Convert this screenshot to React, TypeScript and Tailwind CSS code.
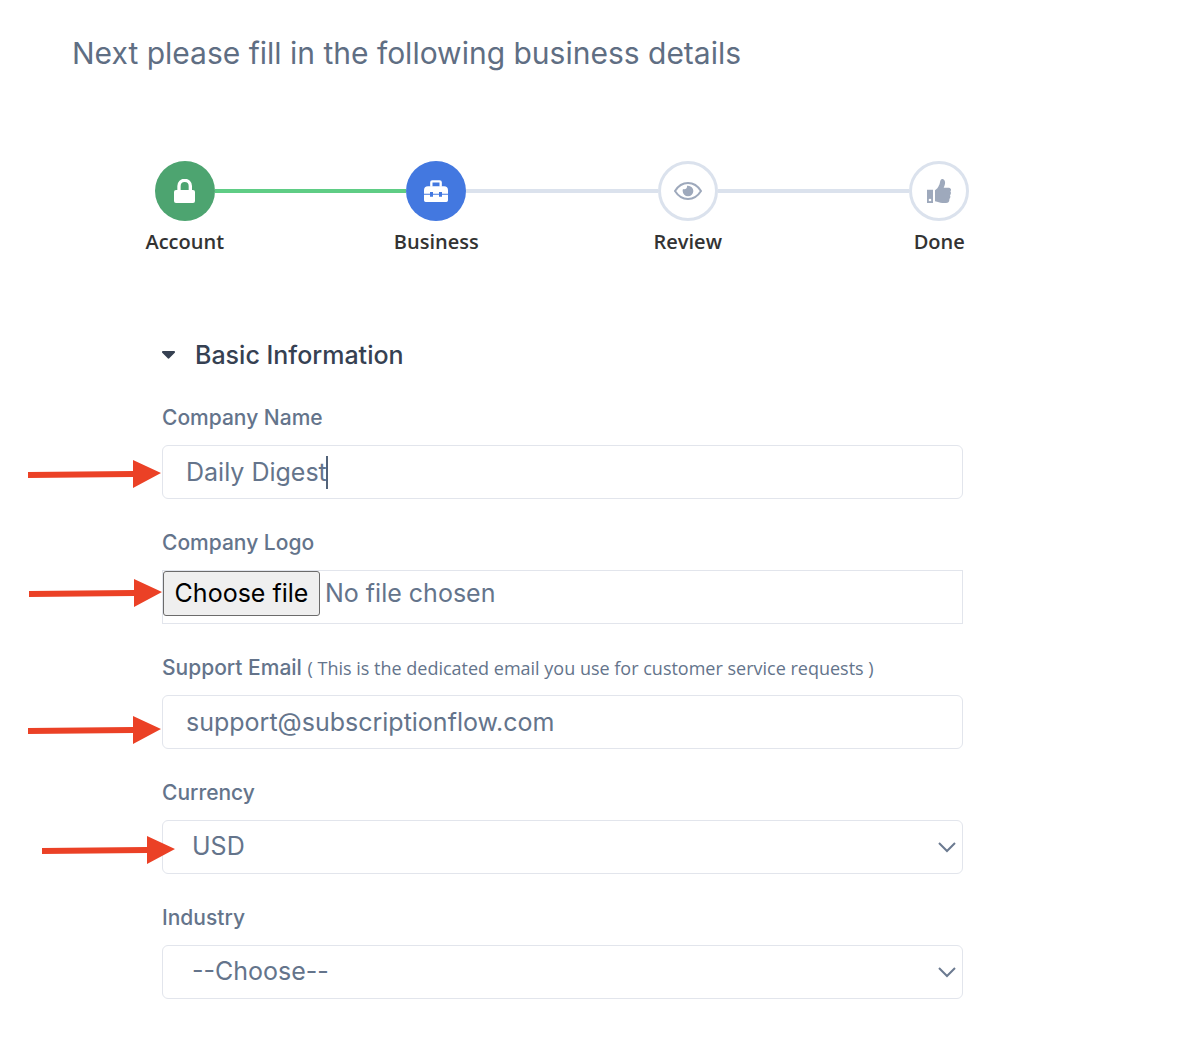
import React, { useState } from 'react'

const LockIcon = () => (
  <svg width="21" height="24" viewBox="0 0 63 72" fill="currentColor" aria-hidden="true">
    <path d="M15 36V21a17 17 0 0 1 34 0V36" fill="none" stroke="currentColor" strokeWidth="10" />
    <rect x="0" y="33" width="63" height="39" rx="6" />
  </svg>
)

const ToolboxIcon = () => (
  <svg width="24" height="22" viewBox="0 0 72 66" fill="currentColor" aria-hidden="true">
    <path d="M22 20V7a3 3 0 0 1 3-3h22a3 3 0 0 1 3 3V20" fill="none" stroke="currentColor" strokeWidth="7" />
    <path d="M12 19H60a12 12 0 0 1 12 12V41H54V36H45V41H27V36H18V41H0V31a12 12 0 0 1 12-12Z" />
    <path d="M0 44H18V50H27V44H45V50H54V44H72V61a5 5 0 0 1-5 5H5a5 5 0 0 1-5-5Z" />
  </svg>
)

const EyeIcon = () => (
  <svg width="28" height="18" viewBox="0 0 84 54" fill="none" aria-hidden="true">
    <path d="M3 27C13 11 26 3 42 3S71 11 81 27C71 43 58 51 42 51S13 43 3 27Z" stroke="currentColor" strokeWidth="6" strokeLinejoin="round" />
    <path d="M42 11a16 16 0 1 1-16 16c0-2 0-4 1-6 7 3 14-3 12-10Z" fill="currentColor" />
  </svg>
)

const ThumbIcon = () => (
  <svg width="24" height="24" viewBox="0 0 72 72" fill="currentColor" aria-hidden="true">
    <path fillRule="evenodd" d="M0 32H18V72H0ZM9 59a4 4 0 1 0 0 8 4 4 0 0 0 0-8Z" />
    <path d="M24 34C29 31 34 25 36 19C39 15 38 9 41 3C43-1 50-1 53 5C56 12 53 19 50 26H66C72 27 74 33 70 37C73 41 72 46 69 49C71 53 70 57 67 60C68 67 64 72 57 72H46C38 72 33 68 24 67Z" />
  </svg>
)

const Caret = () => (
  <svg width="13" height="8" viewBox="0 0 26 16" fill="currentColor" aria-hidden="true">
    <path d="M2 0H24C26 0 27 2 25 4L15 14C14 16 12 16 11 14L1 4C-1 2 0 0 2 0Z" />
  </svg>
)

const Chevron = () => (
  <svg
    className="pointer-events-none absolute right-[7px] top-[22px] text-[#6b7a90]"
    width="18"
    height="11"
    viewBox="0 0 18 11"
    fill="none"
    aria-hidden="true"
  >
    <path d="M1 1L9 9L17 1" stroke="currentColor" strokeWidth="2" />
  </svg>
)

const Arrow = ({ className }: { className: string }) => (
  <svg className={`pointer-events-none absolute ${className}`} width="134" height="28" viewBox="0 0 134 28" fill="#eb4126" aria-hidden="true">
    <path d="M0 12L105 11V0L133 13L105 28V17L0 18Z" />
  </svg>
)

const steps = [
  { name: 'Account', icon: <LockIcon />, circle: 'bg-[#4da470] text-white', before: '', after: 'bg-[#5fcd85]' },
  { name: 'Business', icon: <ToolboxIcon />, circle: 'bg-[#4378e0] text-white', before: 'bg-[#5fcd85]', after: 'bg-[#dbe2ed]' },
  { name: 'Review', icon: <EyeIcon />, circle: 'border-3 border-[#dbe2ed] text-[#9ea9bc]', before: 'bg-[#dbe2ed]', after: 'bg-[#dbe2ed]' },
  { name: 'Done', icon: <ThumbIcon />, circle: 'border-3 border-[#dbe2ed] text-[#9ea9bc]', before: 'bg-[#dbe2ed]', after: '' },
]

const Stepper = () => (
  <ol className="grid grid-cols-4">
    {steps.map((step) => (
      <li key={step.name} className="flex flex-col gap-1.5">
        <div className="flex items-center">
          <div className={`h-1 flex-1 ${step.before}`}></div>
          <div className={`flex size-15 items-center justify-center rounded-full ${step.circle}`}>{step.icon}</div>
          <div className={`h-1 flex-1 ${step.after}`}></div>
        </div>
        <span className="text-center font-['Open_Sans',sans-serif] text-xl/[30px] font-semibold text-[#333]">{step.name}</span>
      </li>
    ))}
  </ol>
)

const labelStyle = 'text-[21px]/[30px] font-medium text-[#64748b]'
const controlStyle = 'block h-[54px] w-full border border-[#e2e5ec] bg-white text-[25px] text-[#64748b] outline-none'

export default function App() {
  const [open, setOpen] = useState(true)
  const [company, setCompany] = useState('Daily Digest')
  const [fileName, setFileName] = useState('No file chosen')

  return (
    <main className="bg-white pb-14 font-[Inter,sans-serif]">
      <h1 className="px-[72px] pt-8 text-[30px]/[42px] text-[#5f6e83]">
        Next please fill in the following business details
      </h1>
      <div className="pt-[87px] pr-[132px] pl-[59px]">
        <Stepper />
        <form className="pt-20 pr-[102px] pl-[103px]">
          <button
            type="button"
            className="flex items-center gap-5 text-[25px]/[36px] font-medium text-[#364152]"
            aria-expanded={open}
            onClick={() => setOpen(!open)}
          >
            <Caret />
            Basic Information
          </button>
          {open && (
            <div className="flex flex-col gap-[29px] pt-[30px]">
              <div className="flex flex-col gap-3">
                <label htmlFor="company" className={labelStyle}>Company Name</label>
                <div className="relative">
                  <input
                    id="company"
                    type="text"
                    className={`${controlStyle} rounded-md px-[23px]`}
                    value={company}
                    onChange={(e) => setCompany(e.target.value)}
                  />
                  <span className="pointer-events-none absolute top-[11px] left-[164px] h-[33px] w-0.5 bg-[#536379]"></span>
                  <Arrow className="top-[15px] -left-[134px]" />
                </div>
              </div>

              <div className="flex flex-col gap-3">
                <label htmlFor="logo" className={labelStyle}>Company Logo</label>
                <div className="relative">
                  <input
                    id="logo"
                    type="file"
                    className="sr-only"
                    onChange={(e) => setFileName(e.target.files?.[0]?.name ?? 'No file chosen')}
                  />
                  <label htmlFor="logo" className={`${controlStyle} cursor-pointer`}>
                    <span className="flex items-center gap-[5px]">
                      <span className="flex h-[45px] w-[157px] items-center justify-center rounded-[3px] border border-[#6b6b6b] bg-[#efefef] text-black">
                        Choose file
                      </span>
                      {fileName}
                    </span>
                  </label>
                  <Arrow className="top-[9px] -left-[133px]" />
                </div>
              </div>

              <div className="flex flex-col gap-3">
                <label htmlFor="email" className={labelStyle}>
                  Support Email{' '}
                  <span className="font-['Open_Sans',sans-serif] text-lg/[30px] font-normal">
                    ( This is the dedicated email you use for customer service requests )
                  </span>
                </label>
                <div className="relative">
                  <input id="email" type="email" className={`${controlStyle} rounded-md px-[23px]`} defaultValue="support@subscriptionflow.com" />
                  <Arrow className="top-[21px] -left-[134px]" />
                </div>
              </div>

              <div className="flex flex-col gap-3">
                <label htmlFor="currency" className={labelStyle}>Currency</label>
                <div className="relative">
                  <select id="currency" className={`${controlStyle} appearance-none rounded-md px-[29px]`}>
                    <option>USD</option>
                  </select>
                  <Chevron />
                  <Arrow className="top-4 -left-[120px]" />
                </div>
              </div>

              <div className="flex flex-col gap-3">
                <label htmlFor="industry" className={labelStyle}>Industry</label>
                <div className="relative">
                  <select id="industry" className={`${controlStyle} appearance-none rounded-md px-[29px]`}>
                    <option>--Choose--</option>
                  </select>
                  <Chevron />
                </div>
              </div>
            </div>
          )}
        </form>
      </div>
    </main>
  )
}
